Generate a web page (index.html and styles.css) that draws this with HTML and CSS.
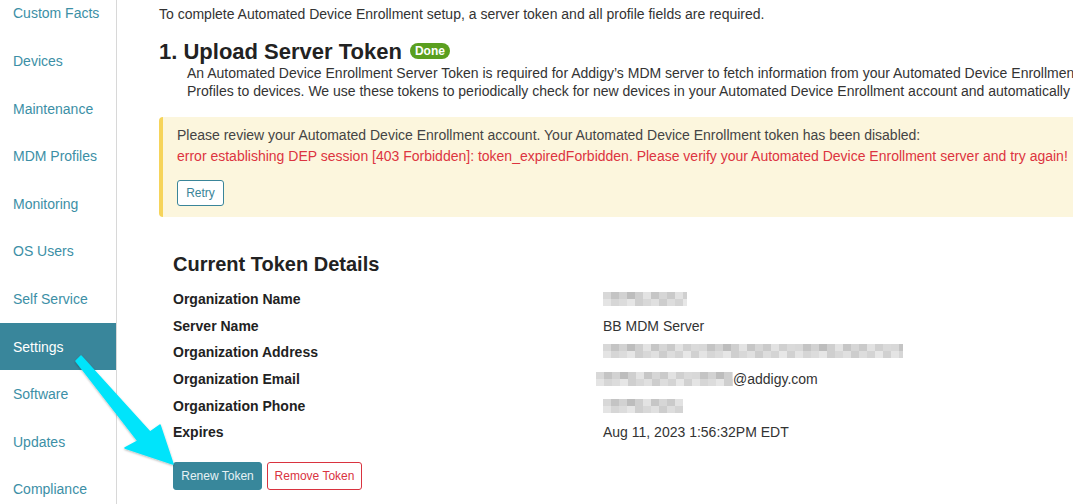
FILE: index.html
```html
<!DOCTYPE html>
<html>
<head>
<meta charset="utf-8">
<link rel="stylesheet" href="styles.css">
</head>
<body>
<div class="page">
  <nav class="sidebar">
    <div class="nav-item">Custom Facts</div>
    <div class="nav-item">Devices</div>
    <div class="nav-item">Maintenance</div>
    <div class="nav-item">MDM Profiles</div>
    <div class="nav-item">Monitoring</div>
    <div class="nav-item">OS Users</div>
    <div class="nav-item">Self Service</div>
    <div class="nav-item active">Settings</div>
    <div class="nav-item">Software</div>
    <div class="nav-item">Updates</div>
    <div class="nav-item">Compliance</div>
  </nav>
  <main class="main">
    <p class="intro">To complete Automated Device Enrollment setup, a server token and all profile fields are required.</p>
    <h2 class="step-title">1. Upload Server Token <span class="badge">Done</span></h2>
    <p class="step-desc">An Automated Device Enrollment Server Token is required for Addigy’s MDM server to fetch information from your Automated Device Enrollment account and assign<br>Profiles to devices. We use these tokens to periodically check for new devices in your Automated Device Enrollment account and automatically assign them.</p>
    <div class="alert">
      <div class="alert-text">Please review your Automated Device Enrollment account. Your Automated Device Enrollment token has been disabled:</div>
      <div class="alert-error">error establishing DEP session [403 Forbidden]: token_expiredForbidden. Please verify your Automated Device Enrollment server and try again!</div>
      <button class="btn btn-outline-teal">Retry</button>
    </div>
    <section class="token">
      <h3 class="token-title">Current Token Details</h3>
      <div class="rows">
        <div class="row"><span class="label">Organization Name</span><span class="value"><span class="blur blur-name"></span></span></div>
        <div class="row"><span class="label">Server Name</span><span class="value">BB MDM Server</span></div>
        <div class="row"><span class="label">Organization Address</span><span class="value"><span class="blur blur-addr"></span></span></div>
        <div class="row"><span class="label">Organization Email</span><span class="value value-email"><span class="blur blur-email"></span>@addigy.com</span></div>
        <div class="row"><span class="label">Organization Phone</span><span class="value"><span class="blur blur-phone"></span></span></div>
        <div class="row"><span class="label">Expires</span><span class="value">Aug 11, 2023 1:56:32PM EDT</span></div>
      </div>
      <div class="actions">
        <button class="btn btn-teal">Renew Token</button>
        <button class="btn btn-outline-red">Remove Token</button>
      </div>
    </section>
  </main>
</div>
<svg class="arrow" width="1073" height="504" viewBox="0 0 1073 504">
  <defs>
    <filter id="sh" x="-20%" y="-20%" width="140%" height="140%">
      <feDropShadow dx="0" dy="1" stdDeviation="1.2" flood-color="#000" flood-opacity="0.3"/>
    </filter>
  </defs>
  <polygon filter="url(#sh)" fill="#00e4fb" stroke="#00e4fb" stroke-width="1.5" stroke-linejoin="round"
    points="76,361 138,441 125,448 173,464 160,425 150,432 81,356"/>
</svg>
</body>
</html>
```

FILE: styles.css
```css
* { box-sizing: border-box; }
html, body { margin: 0; padding: 0; }
body {
  width: 1073px;
  height: 504px;
  overflow: hidden;
  background: #fff;
  font-family: "Liberation Sans", Arial, Helvetica, sans-serif;
  color: #333;
  position: relative;
}
.page {
  display: flex;
  height: 504px;
}
.sidebar {
  width: 117px;
  flex: 0 0 117px;
  border-right: 1px solid #d8d8d8;
  display: flex;
  flex-direction: column;
  margin-top: -10.4px;
}
.nav-item {
  height: 47.6px;
  flex: 0 0 47.6px;
  display: flex;
  align-items: center;
  padding-left: 13px;
  font-size: 14px;
  color: #3c8fa6;
}
.nav-item.active {
  background: #39869b;
  color: #fff;
}
.main {
  flex: 1;
  overflow: hidden;
  padding-left: 42px;
  padding-top: 4px;
}
.intro {
  margin: 0;
  font-size: 14px;
  line-height: 20px;
  white-space: nowrap;
  color: #333;
}
.step-title {
  margin: 15px 0 0;
  font-size: 22px;
  line-height: 25px;
  font-weight: bold;
  color: #222;
  white-space: nowrap;
  display: flex;
  align-items: center;
}
.badge {
  display: inline-block;
  margin-left: 8px;
  background: #5a9f1f;
  color: #fff;
  font-size: 12px;
  font-weight: bold;
  line-height: 16px;
  padding: 0 5px;
  border-radius: 9px;
  position: relative;
  top: -1px;
}
.step-desc {
  margin: 0 0 0 28px;
  font-size: 14px;
  line-height: 18px;
  white-space: nowrap;
  color: #333;
}
.alert {
  margin-top: 17px;
  width: 1000px;
  height: 100px;
  background: #fcf6dd;
  border-left: 4px solid #f6d45a;
  border-radius: 4px;
  padding: 8px 0 0 14px;
}
.alert-text {
  font-size: 14px;
  line-height: 21px;
  color: #444;
  white-space: nowrap;
}
.alert-error {
  font-size: 14px;
  line-height: 21px;
  color: #dc3440;
  white-space: nowrap;
}
.btn {
  font-family: "Liberation Sans", Arial, sans-serif;
  font-size: 12px;
  border-radius: 3px;
  background: #fff;
  cursor: pointer;
}
.btn-outline-teal {
  margin-top: 13px;
  height: 26px;
  width: 47px;
  padding: 0;
  border: 1px solid #3a8599;
  color: #3a8599;
}
.token {
  padding-left: 14px;
  padding-top: 27px;
}
.token-title {
  margin: 0;
  font-size: 20px;
  line-height: 40px;
  font-weight: bold;
  color: #222;
}
.rows {
  margin-top: 2px;
  display: flex;
  flex-direction: column;
}
.row {
  display: flex;
  height: 26.6px;
  align-items: center;
  font-size: 14px;
}
.label {
  width: 430px;
  font-weight: bold;
  color: #222;
}
.value {
  color: #333;
  display: flex;
  align-items: center;
}
.value-email { margin-left: -7px; }
.blur {
  display: inline-block;
  height: 14px;
  background:
    linear-gradient(90deg, #d8d8d8 0 8px, #c4c4c4 8px 16px, #d2d2d2 16px 24px, #bdbdbd 24px 32px, #cfcfcf 32px 40px, #e3e3e3 40px 48px, #c6c6c6 48px 56px, #d6d6d6 56px 64px, #cacaca 64px 72px, #e2e2e2 72px 80px, #d0d0d0 80px 88px, #dadada 88px 96px) 0 0 / 96px 7px repeat-x,
    linear-gradient(90deg, #e4e4e4 0 8px, #d6d6d6 8px 16px, #dcdcdc 16px 24px, #e6e6e6 24px 32px, #cfcfcf 32px 40px, #d8d8d8 40px 48px, #e0e0e0 48px 56px, #cdcdcd 56px 64px, #dddddd 64px 72px, #d4d4d4 72px 80px, #e7e7e7 80px 88px, #d1d1d1 88px 96px) 0 7px / 96px 7px repeat-x;
}
.blur-name { width: 84px; }
.blur-addr { width: 300px; height: 16px; }
.blur-email { width: 137px; }
.blur-phone { width: 80px; }
.actions {
  display: flex;
  gap: 5px;
  margin-top: 16px;
}
.btn-teal {
  height: 28px;
  width: 89px;
  padding: 0;
  background: #38879b;
  border: 1px solid #38879b;
  color: #e6f2f5;
}
.btn-outline-red {
  height: 28px;
  width: 95px;
  padding: 0;
  border: 1px solid #d9333f;
  color: #d9333f;
}
.arrow {
  position: absolute;
  left: 0;
  top: 0;
  pointer-events: none;
}
```
